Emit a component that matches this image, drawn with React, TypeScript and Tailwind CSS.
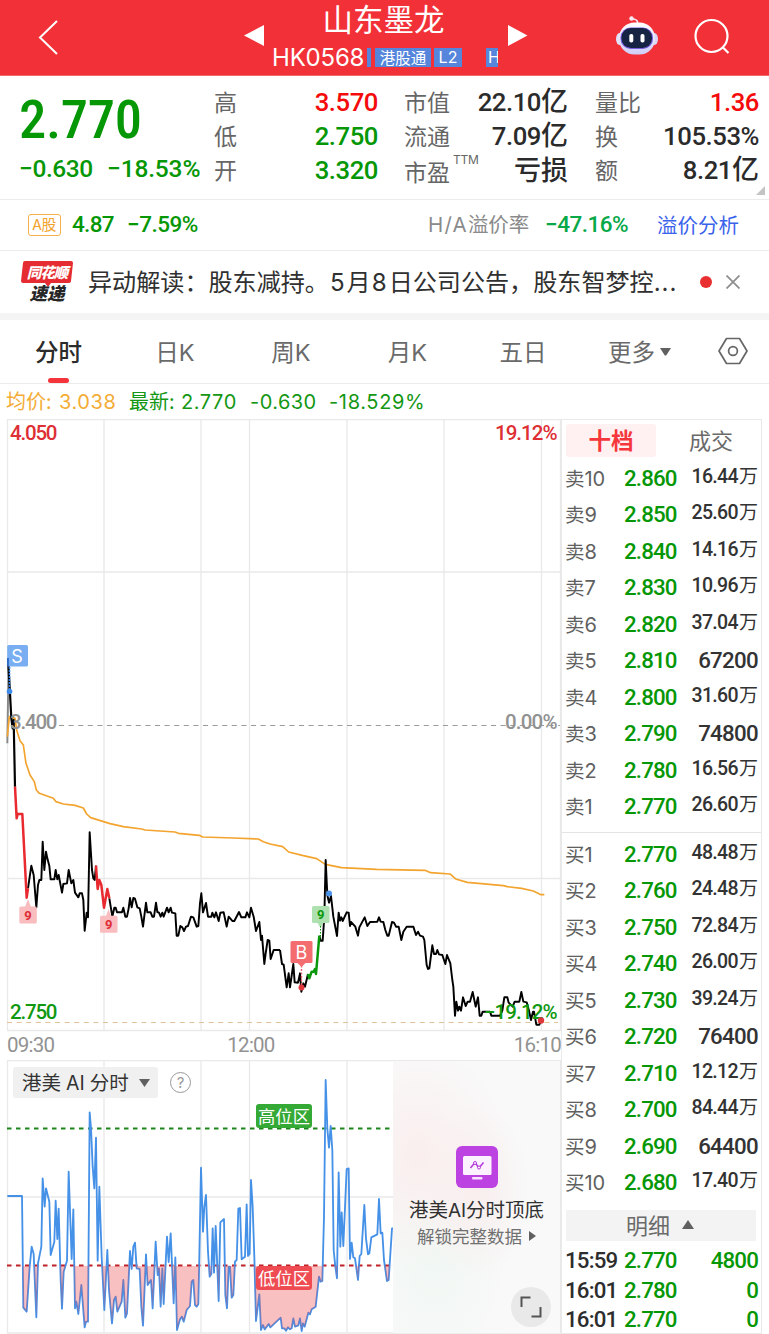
const DIN = "font-['Roboto','Noto_Sans_CJK_SC',sans-serif] font-medium";

const sell: [string, string, string][] = [
  ['卖10', '2.860', '16.44万'], ['卖9', '2.850', '25.60万'], ['卖8', '2.840', '14.16万'],
  ['卖7', '2.830', '10.96万'], ['卖6', '2.820', '37.04万'], ['卖5', '2.810', '67200'],
  ['卖4', '2.800', '31.60万'], ['卖3', '2.790', '74800'], ['卖2', '2.780', '16.56万'],
  ['卖1', '2.770', '26.60万'],
];
const buy: [string, string, string][] = [
  ['买1', '2.770', '48.48万'], ['买2', '2.760', '24.48万'], ['买3', '2.750', '72.84万'],
  ['买4', '2.740', '26.00万'], ['买5', '2.730', '39.24万'], ['买6', '2.720', '76400'],
  ['买7', '2.710', '12.12万'], ['买8', '2.700', '84.44万'], ['买9', '2.690', '64400'],
  ['买10', '2.680', '17.40万'],
];
const trades: [string, string, string][] = [
  ['15:59', '2.770', '4800'], ['16:01', '2.780', '0'], ['16:01', '2.770', '0'],
];

function Robot() {
  return (
    <svg width="44" height="42" viewBox="0 0 44 42">
      <defs>
        <linearGradient id="head" x1="0" y1="0" x2="0" y2="1">
          <stop offset="0" stopColor="#fff" />
          <stop offset="1" stopColor="#cfcdf5" />
        </linearGradient>
      </defs>
      <path d="M22.500 9 V7 Q22 4 17 4" fill="none" stroke="#f3e8f5" strokeWidth="1.600" />
      <circle cx="16.500" cy="3.500" r="2.200" fill="#fbe9f2" />
      <ellipse cx="4.500" cy="24" rx="3.500" ry="6" fill="#e3e0fa" />
      <ellipse cx="39.500" cy="24" rx="3.500" ry="6" fill="#d9d6f8" />
      <rect x="4" y="7.500" width="36" height="32" rx="15.500" fill="url(#head)" />
      <rect x="5.500" y="12.500" width="32.500" height="21.500" rx="10" fill="#7a5fe0" />
      <rect x="6.500" y="13" width="30.500" height="20" rx="9.500" fill="#162343" />
      <rect x="14.300" y="19" width="4" height="8.500" rx="1.800" fill="#fff" />
      <rect x="25.500" y="19" width="4" height="8.500" rx="1.800" fill="#fff" />
    </svg>
  );
}

function Header() {
  return (
    <header className="flex h-[76px] border-b border-[#f4686c] bg-[#f23038] text-white">
      <div className="flex w-[244px] items-center pl-[38px]">
        <svg width="22" height="38" viewBox="0 0 22 38" fill="none" stroke="#fff" strokeWidth="2">
          <path d="M19 2 L2 18.500 L19 35" />
        </svg>
      </div>
      <svg className="mt-[25px] h-[22px] w-[21px]" viewBox="0 0 21 22"><path d="M0 10.500 L20 0 V21 Z" fill="#fff" /></svg>
      <div className="flex w-[242px] flex-col items-center">
        <div className="mr-[5px] h-[42px] text-[30.500px] leading-[37px]">山东墨龙</div>
        <div className="flex h-[30px] w-full items-center pl-[7px]">
          <span className="mt-[2px] w-[95px] font-['Inter'] text-[24px] leading-[30px] tracking-[-0.200px]">HK0568</span>
          <i className="h-[19px] w-[4px] bg-[#5586db]" />
          <span className="ml-[4px] h-[19px] w-[56px] bg-[#5586db] text-center text-[15.500px] leading-[18px]">港股通</span>
          <span className="ml-[3px] h-[19px] w-[28px] bg-[#5586db] text-center font-['Inter'] text-[16px] leading-[19px]">L2</span>
          <span className="ml-[24px] h-[19px] w-[12px] overflow-hidden bg-[#5586db] pl-[2px] font-['Inter'] text-[16px] leading-[19px]">H</span>
        </div>
      </div>
      <svg className="mt-[25px] h-[22px] w-[21px]" viewBox="0 0 21 22"><path d="M20.500 10.500 L1 0 V21 Z" fill="#fff" /></svg>
      <div className="ml-[87px] mt-[15px]"><Robot /></div>
      <svg className="ml-[35px] mt-[18px] h-[38px] w-[38px]" viewBox="0 0 38 38" fill="none" stroke="#fff" strokeWidth="2.200">
        <circle cx="17.500" cy="18" r="16" /><path d="M28.500 29 L34.500 35" />
      </svg>
    </header>
  );
}

function Stat({ label, value, cls, sup }: { label: string; value: string; cls: string; sup?: boolean }) {
  const unit = value.endsWith('亿');
  return (
    <div className="flex h-[34px] items-center justify-between whitespace-nowrap">
      <span className={sup ? 'mt-[2px] flex text-[23px] text-[#666]' : 'mt-[-1px] flex text-[23px] text-[#666]'}>
        {label}
        {sup && <span className="ml-[3px] mt-[-3px] h-[20px] font-['Inter'] text-[12px] tracking-[-0.200px]">TTM</span>}
      </span>
      {sup ? (
        <span className={`text-[27px] font-medium leading-[34px] mt-[-2px] ${cls}`}>{value}</span>
      ) : (
        <span className={`${DIN} flex items-center text-[25.700px] leading-[34px] tracking-[-0.450px] ${cls}`}>
          {unit ? value.slice(0, -1) : value}
          {unit && <span className="mt-[-1px] text-[27px] tracking-normal">亿</span>}
        </span>
      )}
    </div>
  );
}

function Quote() {
  const g = 'text-[#069706]';
  const k = 'text-[#2b2b2b]';
  return (
    <section className="flex h-[124px] border-b border-[#ececec] bg-white">
      <div className="w-[214px] pl-[19px]">
        <div className="mt-[13px] h-[56px] font-['Roboto_Condensed'] text-[54.500px] font-medium leading-[60px] tracking-[-0.300px] text-[#069706]">2.770</div>
        <div className={`${DIN} mt-[10px] flex whitespace-nowrap text-[24.500px] leading-[27px] tracking-[-0.400px] text-[#069706]`}>
          <span className="w-[88px]">−0.630</span><span className="tracking-[-0.150px]">−18.53%</span>
        </div>
      </div>
      <div className="w-[164px] pt-[9px]">
        <Stat label="高" value="3.570" cls="text-[#f40b0b]" />
        <Stat label="低" value="2.750" cls={g} />
        <Stat label="开" value="3.320" cls={g} />
      </div>
      <div className="ml-[26px] w-[164px] pt-[9px]">
        <Stat label="市值" value="22.10亿" cls={k} />
        <Stat label="流通" value="7.09亿" cls={k} />
        <Stat label="市盈" value="亏损" cls={k} sup />
      </div>
      <div className="ml-[27px] w-[164px] pt-[9px]">
        <Stat label="量比" value="1.36" cls="text-[#f40b0b]" />
        <Stat label="换" value="105.53%" cls={k} />
        <Stat label="额" value="8.21亿" cls={k} />
      </div>
      <svg className="ml-[-3px] mt-[110px] h-[9px] w-[9px] shrink-0" viewBox="0 0 9 9"><path d="M9 0 V9 H0 Z" fill="#c4c4c4" /></svg>
    </section>
  );
}

function Premium() {
  return (
    <section className="flex h-[51px] items-center border-b border-[#ececec] bg-white">
      <span className="ml-[28px] flex h-[22px] w-[33px] items-center justify-center rounded-[3px] border border-[#f5b04c] pb-[1px] text-[15px] text-[#f2a32c]">A股</span>
      <span className={`${DIN} ml-[11px] w-[55px] text-[22.500px] tracking-[-0.700px] text-[#069706]`}>4.87</span>
      <span className={`${DIN} w-[120px] text-[22.500px] tracking-[-0.500px] text-[#069706]`}>−7.59%</span>
      <span className="ml-[181px] mt-[-1px] w-[117px] whitespace-nowrap text-[20.500px] text-[#8a8a8a]"><span className="font-['Inter'] tracking-[1.200px]">H/A</span>溢价率</span>
      <span className={`${DIN} w-[112px] text-[22.500px] tracking-[-0.500px] text-[#06a848]`}>−47.16%</span>
      <span className="mt-[-2px] whitespace-nowrap text-[20.500px] text-[#3a63ec]">溢价分析</span>
    </section>
  );
}

function News() {
  return (
    <section className="flex h-[69px] items-center border-b-[7px] border-[#f4f4f4] bg-white">
      <div className="relative ml-[21px] flex h-[42px] w-[52px] flex-col items-center font-bold italic leading-none">
        <svg className="absolute left-0 top-0 h-[27px] w-[52px]" viewBox="0 0 52 27"><path d="M4 0 H50 Q52 0 52 2 L50 20 Q50 22 48 22 H30 L27 26 L24 22 H2 Q0 22 0 20 L2 2 Q2 0 4 0 Z" fill="#e42c32" /></svg>
        <span className="relative text-[14.500px] font-black leading-[21px] tracking-[-1px] text-white">同花顺</span>
        <span className="relative mt-[1px] text-[17.500px] font-black leading-[20px] text-[#262626]">速递</span>
      </div>
      <div className="ml-[15px] mt-[-1px] w-[604px] whitespace-nowrap text-[24.100px] leading-[40px] text-[#303030]">
        异动解读：股东减持。<span className="pl-[1px] pr-[2px] font-['Inter']">5</span>月<span className="pl-[1px] pr-[2px] font-['Inter']">8</span>日公司公告，股东智梦控<span className="font-['Inter'] tracking-[1px]">...</span>
      </div>
      <i className="ml-[8px] h-[12px] w-[12px] rounded-full bg-[#e93030]" />
      <svg className="ml-[14px] h-[14px] w-[14px]" viewBox="0 0 14 14" stroke="#8f8f8f" strokeWidth="1.800"><path d="M0.500 0.500 L13.500 13.500 M13.500 0.500 L0.500 13.500" /></svg>
    </section>
  );
}

function Tabs() {
  return (
    <nav className="flex h-[64px] items-center border-b border-[#ececec] bg-white text-[23.500px] text-[#6a6a6a]">
      <div className="flex h-full w-[117px] flex-col items-center font-medium text-[#2b2b2b]">
        <span className="h-[58px] leading-[62px]">分时</span>
        <i className="h-[5px] w-[21px] rounded-full bg-[#f5333b]" />
      </div>
      <span className="mt-[1px] w-[116px] text-center">日<span className="font-['Inter']">K</span></span>
      <span className="mt-[1px] w-[116px] text-center">周<span className="font-['Inter']">K</span></span>
      <span className="mt-[1px] w-[117px] text-center">月<span className="font-['Inter']">K</span></span>
      <span className="w-[114px] text-center">五日</span>
      <span className="flex w-[138px] items-center pl-[28px]">
        更多
        <svg className="ml-[5px] h-[8px] w-[11px]" viewBox="0 0 11 8"><path d="M0 0 H11 L6.500 7 Q5.500 8 4.500 7 Z" fill="#606060" /></svg>
      </span>
      <svg className="mt-[-2px] h-[28px] w-[30px]" viewBox="0 0 30 28" fill="none" stroke="#666" strokeWidth="1.700">
        <path d="M8.500 1.500 H21.500 L29 14 L21.500 26.500 H8.500 L1 14 Z" strokeLinejoin="round" /><circle cx="15" cy="14" r="4.400" />
      </svg>
    </nav>
  );
}

const GRID = 'M7 419.500 H560.500 M7.500 419 V1030 M560.500 419 V1030 M104 419 V1030 M201 419 V1030 M249.500 419 V1030 M347 419 V1030 M444 419 V1030 M541.500 419 V1030 M7 572 H560 M7 878.500 H560 M7 1030.500 H561';

const OPEN = '22,-230 26,-485';
const P1 = '24,-485 30,-380 34,-305 38,-275 41,-300 45,-100';
const R1 = '45,-100 50,-5 53,-18 67,-18 80,233 84,205';
const P2 = '84,205 94,137 101,165 109,262 114,195 118,180 124,180 128,65 133,150 138,95 142,115 148,138 152,178 163,178 167,150 172,178 176,165 186,218 190,192 201,190 206,150 214,190 220,180 225,218 235,232 239,220 246,220 250,240 254,332 260,278 264,292 269,37 276,150 280,175 284,180 288,137';
const R2 = '288,137 293,207 298,180 304,195 312,263 322,207 328,235';
const P3 = '328,235 337,290 343,263 347,263 351,277 366,277 370,263 376,290 381,290 386,265 390,234 395,262 400,234 405,236 412,262 419,265 424,290 429,320 438,248 442,277 452,277 457,290 462,290 468,248 472,276 477,278 482,290 487,278 491,290 501,263 506,277 512,263 516,278 526,280 530,347 535,347 541,318 547,322 552,333 558,320 564,318 573,290 580,292 590,320 595,318 600,250 604,220 609,277 618,249 624,290 634,290 637,278 643,292 648,277 656,303 661,278 671,277 680,320 686,290 697,303 703,303 717,276 724,292 736,292 741,277 748,292 753,263 761,290 768,333 778,306 783,360 786,347 793,432 797,400 803,360 808,362 812,417 821,390 840,390';
const P4 = '30,390 36,432 41,434 50,502 56,460 60,502 70,432 74,487 84,488 90,460 94,515 100,490 105,500 114,462';
const G1 = '114,462 118,475 125,455 131,455 135,447 138,462 148,347';
const P5 = '148,347 152,362 158,362 163,290 167,120 172,225 177,248 183,228 190,290 201,348 206,278 210,302 214,292 218,303 230,277 236,278 240,318 243,306 256,320 264,347 268,322 284,292 292,318 300,306 322,305 327,292 332,305 340,306 346,330 352,347 356,347 366,306 372,308 378,320 386,320 394,360 400,335 410,320 430,320 438,345 444,335 450,347 459,350 463,360 470,435 474,447 478,445 487,376 492,402 498,402 502,390 507,403 517,405 526,432 531,405 541,430 547,480 550,500 555,587 559,545 564,572 568,560 573,572 579,532 587,558 593,545 600,545 608,516 617,560 624,532 629,587 634,587 638,575 660,575 664,587 690,587 697,572 703,532 712,532 716,548 728,560 734,545 748,545 754,516 760,545 770,547 777,572 783,600 789,575 792,575 799,614 808,614 814,602';
const AVG1 = '22,-250 28,-310 45,-305 50,-270 60,-238 70,-225 78,-170 90,-135 103,-115 109,-90 118,-80 160,-65 168,-55 190,-48 225,-44 250,-36 260,-18 272,-7 330,11 370,20 425,27 435,30 525,36 535,40 598,46 608,51 700,54 775,57 790,65 810,72';
const AVG2 = '0,72 38,80 56,96 100,107 140,116 166,133 215,143 320,148 465,151 482,158 540,162 557,177 592,187 700,197 712,200 755,205 790,213 813,224 823,224';
const AI = '22,438 66,438 70,773 80,785 89,650 95,590 101,612 109,802 114,640 124,590 128,385 134,470 138,415 148,455 152,615 163,575 167,452 172,567 176,476 182,690 186,776 191,665 201,632 206,365 215,627 220,478 225,775 229,755 235,792 244,705 254,832 258,815 264,815 269,187 273,235 278,350 283,415 288,263 293,632 298,410 305,620 313,780 322,600 327,720 336,820 342,750 347,740 352,785 365,755 370,690 376,803 381,790 390,603 395,657 400,590 405,578 410,655 419,657 424,770 429,827 438,613 443,705 453,690 458,775 467,575 473,675 477,655 482,770 487,655 491,762 501,560 506,636 512,550 521,760 526,622 531,840 540,808 546,800 551,815 560,780 570,768 575,695 580,690 585,765 590,770 595,762 598,620 603,353 609,545 613,470 618,435 624,605 629,680 634,672 638,535 642,668 647,528 656,753 661,517 672,507 676,735 681,775 686,650 690,650 695,743 700,735 705,635 710,630 715,476 720,474 725,628 735,620 740,463 744,618 749,612 753,390 758,470 763,620 768,813 778,733 783,840 789,825 794,838 806,822 811,832 842,803 846,835 853,835 858,842 864,832 870,838 875,835 880,805 885,830 895,826 900,805 905,843 909,820 914,830 925,788 930,793 935,778 947,770 957,680 962,695 967,693 972,500 977,90 982,235 987,293 992,228 997,300 1001,600 1006,650 1011,685 1016,367 1021,590 1025,487 1030,588 1040,357 1046,355 1050,627 1055,578 1060,622 1065,625 1074,690 1079,618 1084,612 1093,465 1098,565 1104,613 1108,610 1114,562 1132,553 1137,447 1142,550 1147,548 1152,630 1161,693 1166,690 1176,535 1180,535';

function Line({ pts, color, w = 5.8 }: { pts: string; color: string; w?: number }) {
  return <polyline points={pts} fill="none" stroke={color} strokeWidth={w} strokeLinejoin="round" />;
}

function Flag({ x, y, color, fill }: { x: number; y: number; color: string; fill: string }) {
  return (
    <g>
      <rect x={x} y={y} width="17.500" height="17" rx="1.500" fill={fill} />
      <text x={x + 8.7} y={y + 13} textAnchor="middle" className="font-['Roboto'] text-[13px] font-bold" fill={color}>9</text>
    </g>
  );
}

function PriceChart() {
  return (
    <svg className="block h-[613px] w-[561px]" viewBox="0 419 561 613">
      <path d={GRID} stroke="#e9e9e9" strokeWidth="1.300" fill="none" />
      <path d="M59 725.500 H560" stroke="#9b9b9b" strokeWidth="1.200" strokeDasharray="5 4.600" />
      <path d="M7 1022.500 H558" stroke="#e0c39a" strokeWidth="1.200" strokeDasharray="5 4.600" />
      <g transform="translate(0 820) scale(.33333)">
        <Line pts={OPEN} color="#888" />
        <Line pts={AVG1} color="#f3a42e" w={5} />
        <Line pts={P1} color="#000" w={6.5} />
        <Line pts={P2} color="#000" />
        <Line pts={P3} color="#000" />
        <Line pts={R1} color="#e8292f" w={7.5} />
        <Line pts={R2} color="#e8292f" w={7.5} />
      </g>
      <g transform="translate(270 820) scale(.33333)">
        <Line pts={AVG2} color="#f3a42e" w={5} />
        <Line pts={P4} color="#000" />
        <Line pts={P5} color="#000" />
        <Line pts={G1} color="#0a980a" w={7.5} />
      </g>
      <path d="M28 899 L31 907 H25 Z M108.500 909 L111 916 H106 Z" fill="#f8bcbf" />
      <Flag x={19.3} y={906.5} color="#e02d35" fill="#f9bcbf" />
      <Flag x={100} y={915.8} color="#e02d35" fill="#f9bcbf" />
      <path d="M317.500 923 H323.500 L320.500 928 Z" fill="#afe0af" />
      <path d="M320.500 926 V936" stroke="#0a980a" strokeWidth="1" strokeDasharray="1.500 1.500" />
      <Flag x={312} y={906} color="#0a980a" fill="#afe0af" />
      <path d="M301.500 962 V985" stroke="#ee6468" strokeWidth="1.400" strokeDasharray="2 1.500" />
      <path d="M297.500 963 H305.500 L301.500 967 Z" fill="#f36c70" />
      <rect x="290.500" y="941" width="22" height="22" rx="1.500" fill="#f36c70" />
      <text x="301.500" y="958.500" textAnchor="middle" className="font-['Inter'] text-[18px]" fill="#fff">B</text>
      <circle cx="301.500" cy="987.500" r="3" fill="#e0373c" />
      <path d="M9.500 667 V690" stroke="#2e7be0" strokeWidth="1.600" strokeDasharray="2 1" />
      <rect x="7.200" y="645" width="20.800" height="21.500" rx="1.500" fill="#79aef2" />
      <path d="M8 658 V666" stroke="#1c5fc0" strokeWidth="1.500" />
      <text x="17" y="662.500" textAnchor="middle" className="font-['Inter'] text-[18px]" fill="#fff">S</text>
      <circle cx="9.500" cy="691.500" r="2.800" fill="#3d8ae8" />
      <circle cx="329" cy="893.500" r="3" fill="#4b92ea" />
      <g className="font-['Roboto'] text-[20.500px] font-medium">
        <text x="10" y="439.500" fill="#dd2f34" textLength="47.500">4.050</text>
        <text x="495" y="439.500" fill="#dd2f34" textLength="62.500">19.12%</text>
        <text x="10" y="728.500" fill="#929292" textLength="47.500">3.400</text>
        <text x="505" y="728.500" fill="#929292" textLength="52.500">0.00%</text>
        <text x="10" y="1019" fill="#109810" textLength="47.500">2.750</text>
        <text x="484" y="1019" fill="#109810" textLength="73.500">−19.12%</text>
      </g>
      <circle cx="541" cy="1020.500" r="3.200" fill="#e0373c" />
    </svg>
  );
}

function AiChart() {
  return (
    <div className="relative h-[274px] w-[561px]">
      <svg className="block h-full w-full" viewBox="0 1060 561 274">
        <defs><clipPath id="low"><rect x="0" y="647" width="1200" height="220" /></clipPath></defs>
        <path d="M7 1060.500 H560.500 V1333 H7.500 V1060 M7 1197 H393 M104 1060 V1333 M201 1060 V1333 M249.500 1060 V1333 M347 1060 V1333" stroke="#e9e9e9" strokeWidth="1.300" fill="none" />
        <path d="M7 1128.500 H393" stroke="#1c861c" strokeWidth="1.800" strokeDasharray="4.500 4.500" />
        <path d="M7 1265.500 H393" stroke="#bd2026" strokeWidth="1.800" strokeDasharray="4.500 4.500" />
        <g transform="translate(0 1050) scale(.33333)">
          <Line pts={AI} color="#4591e8" w={5.5} />
          <polygon points={`22,647 ${AI} 1180,647`} fill="#ee4b50" fillOpacity=".35" clipPath="url(#low)" />
        </g>
      </svg>
      <div className="absolute left-[13px] top-[7px] flex h-[31px] w-[145px] items-baseline whitespace-nowrap rounded-[3px] bg-[#f0f0f0] pl-[9px] text-[19.500px] leading-[29px] text-[#333]">
        港美<span className="mx-[5px] font-['Inter'] text-[19.500px]">AI</span>分时
        <svg className="ml-[10px] h-[8px] w-[11px] self-center" viewBox="0 0 11 8"><path d="M0 0 H11 L5.500 8 Z" fill="#606060" /></svg>
      </div>
      <div className="absolute left-[170px] top-[12px] flex h-[21px] w-[21px] items-center justify-center rounded-full border-[1.500px] border-[#999] font-['Inter'] text-[15px] leading-none text-[#999]">?</div>
      <div className="absolute left-[256px] top-[44px] h-[24px] w-[56px] rounded-[3px] bg-[#35a935] text-center text-[17.300px] leading-[24px] text-white">高位区</div>
      <div className="absolute left-[256px] top-[206px] h-[24px] w-[56px] rounded-[3px] bg-[#ee4c52] text-center text-[17.300px] leading-[23px] text-white">低位区</div>
      <div className="absolute left-[393px] top-[1px] flex h-[272px] w-[167px] flex-col items-center bg-[#f9f9f9] bg-[radial-gradient(ellipse_at_15%_35%,#faeeee_0%,transparent_45%),radial-gradient(ellipse_at_50%_48%,#f8eeee_0%,transparent_45%),radial-gradient(ellipse_at_25%_72%,#f0f7f3_0%,transparent_45%)]">
        <svg className="mt-[85px] h-[42px] w-[42px] shrink-0" viewBox="0 0 42 42">
          <rect width="42" height="42" rx="6" fill="#bd42e2" />
          <rect x="7" y="10" width="28.500" height="19" rx="1.500" fill="#fcf2ff" />
          <rect x="16" y="31" width="10.500" height="2.500" rx="1" fill="#f8e3ff" />
          <path d="M14.500 22 L19 16.500 L23 22 L27.500 16.500" fill="none" stroke="#b43bdc" strokeWidth="1.600" />
          <circle cx="19" cy="17" r="1.500" fill="#fcf2ff" stroke="#b43bdc" /><circle cx="23" cy="21.500" r="1.500" fill="#fcf2ff" stroke="#b43bdc" />
        </svg>
        <div className="mt-[8px] whitespace-nowrap text-[19.500px] leading-[26px] text-[#303030]">港美<span className="font-['Inter'] text-[19px]">AI</span>分时顶底</div>
        <div className="flex items-center whitespace-nowrap text-[17.500px] leading-[24px] text-[#707070]">
          解锁完整数据
          <svg className="ml-[7px] h-[10px] w-[7px]" viewBox="0 0 7 10"><path d="M0 0 L7 5 L0 10 Z" fill="#606060" /></svg>
        </div>
      </div>
      <div className="absolute left-[511px] top-[227px] flex h-[40px] w-[40px] items-center justify-center rounded-full bg-[#e9e9e9]">
        <svg width="22" height="22" viewBox="0 0 22 22" fill="none" stroke="#555" strokeWidth="2"><path d="M1.500 11 V1.500 H10.500 M20.500 11 V20.500 H11.500" /></svg>
      </div>
    </div>
  );
}

function Rows({ data }: { data: [string, string, string][] }) {
  return (
    <>
      {data.map(([l, p, q]) => (
        <div key={l} className="flex h-[36.500px] items-center whitespace-nowrap">
          <span className="w-[59px] text-[19.500px] text-[#606060]">{l.slice(0, 1)}<span className="font-['Inter'] text-[20px] tracking-[-0.200px]">{l.slice(1)}</span></span>
          <span className={`${DIN} w-[53px] text-[22.300px] tracking-[-0.850px] text-[#069706]`}>{p}</span>
          {q.endsWith('万') ? (
            <span className={`${DIN} mt-[-3px] flex flex-1 items-center justify-end text-[19.500px] leading-[24px] tracking-[-0.650px] text-[#333]`}>
              {q.slice(0, -1)}<span className="ml-[1px] text-[19px] font-normal tracking-normal">万</span>
            </span>
          ) : (
            <span className={`${DIN} flex-1 text-right text-[22.300px] tracking-[-0.700px] text-[#333]`}>{q}</span>
          )}
        </div>
      ))}
    </>
  );
}

function OrderBook() {
  return (
    <aside className="flex h-[915px] w-[201px] flex-col border-x-[1.500px] border-y border-[#e9e9e9] bg-white">
      <div className="mt-[4px] flex h-[33px] items-center pl-[4px]">
        <span className="flex h-[33px] w-[90px] items-center justify-center rounded-[3px] bg-[#fff1f1] pb-[2px] text-[22.500px] font-bold text-[#f5363c]">十档</span>
        <span className="ml-[33px] mt-[-3px] text-[22px] text-[#6a6a6a]">成交</span>
      </div>
      <div className="mt-[3px] pl-[3px] pr-[3px]"><Rows data={sell} /></div>
      <i className="mt-[7px] h-px shrink-0 bg-[#e4e4e4]" />
      <div className="mt-[3px] pl-[3px] pr-[3px]"><Rows data={buy} /></div>
      <div className="ml-[4px] mt-[9px] flex h-[31px] w-[190px] shrink-0 items-center bg-[#f3f3f3] pb-[2px] pl-[60px] text-[22px] text-[#6a6a6a]">
        明细
        <svg className="ml-[12px] h-[9px] w-[12px]" viewBox="0 0 12 9"><path d="M0 9 H12 L6 0 Z" fill="#606060" /></svg>
      </div>
      <div className="mt-[5px] pl-[3px] pr-[3px]">
        {trades.map(([t, p, q], i) => (
          <div key={i} className={`${DIN} flex h-[29.500px] items-center text-[22.300px] tracking-[-0.850px] text-[#069706]`}>
            <span className="w-[59px] text-[#2d2d2d]">{t}</span><span className="w-[53px]">{p}</span><span className="flex-1 text-right">{q}</span>
          </div>
        ))}
      </div>
    </aside>
  );
}

export default function App() {
  return (
    <main className="h-[1334px] w-[769px] overflow-hidden bg-white font-['Noto_Sans_CJK_SC',sans-serif]">
      <Header />
      <Quote />
      <Premium />
      <News />
      <Tabs />
      <div className="flex h-[35px] items-center whitespace-nowrap pl-[6px] text-[20px]">
        <span className="w-[123px] text-[#f3ac36]">均价: <span className="ml-[3px] font-['Inter'] text-[20px] tracking-[0.550px]">3.038</span></span>
        <span className="w-[121px] text-[#149714]">最新: <span className="ml-[2px] font-['Inter'] text-[20px] tracking-[0.550px]">2.770</span></span>
        <span className="w-[79px] font-['Inter'] text-[20px] tracking-[0.450px] text-[#149714]">-0.630</span>
        <span className="font-['Inter'] text-[20px] tracking-[0.650px] text-[#149714]">-18.529%</span>
      </div>
      <div className="flex">
        <div className="w-[561px]">
          <PriceChart />
          <div className="flex h-[28px] justify-between pl-[7px] font-['Roboto'] text-[20.500px] leading-[26px] tracking-[-0.750px] text-[#929292]">
            <span className="w-[147px]">09:30</span><span className="ml-[-66px]">12:00</span><span className="w-[147px] text-right">16:10</span>
          </div>
          <AiChart />
        </div>
        <OrderBook />
      </div>
    </main>
  );
}
